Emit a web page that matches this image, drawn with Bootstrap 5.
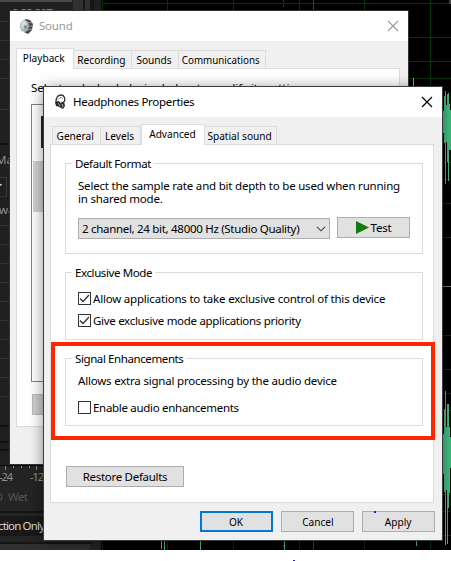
<!DOCTYPE html>
<html lang="en">
<head>
<meta charset="utf-8">
<meta name="viewport" content="width=device-width, initial-scale=1">
<title>Headphones Properties</title>
<link href="https://cdn.jsdelivr.net/npm/bootstrap@5.3.0/dist/css/bootstrap.min.css" rel="stylesheet">
<style>
body{width:451px;height:561px;background:#fff;font-family:"Noto Sans","Open Sans",sans-serif;font-size:11.5px;line-height:17px;color:#000;letter-spacing:-.2px}
.desk{width:451px;height:561px}
.backdrop{left:0;top:0}
.win{background:#f0f0f0;width:398px;height:453px}
.win-sound{left:10px;top:11px;box-shadow:0 0 0 1px #333}
.win-props{left:44px;top:87px;box-shadow:0 0 0 1px #3c3c3c,0 2px 14px rgba(0,0,0,.5)}
.title{height:30px;background:#fff;padding:0 9px 0 10px}
.title .caption{line-height:16px;padding-left:3px;margin-left:3px}
.inactive{color:#999}
.tabs{padding-left:8px;height:27px}
.tab-x{height:18px;border:1px solid #dcdcdc;border-bottom:0;border-left-width:0;white-space:nowrap;line-height:17px;letter-spacing:0;background:#f0f0f0;display:flex;justify-content:center}
.tab-x.first{border-left-width:1px}
.tab-x.on{height:21px;background:#fff;border-left-width:1px;margin-bottom:-1px;z-index:1}
.narrow{display:inline-block;transform:scaleX(.88);letter-spacing:0}
.tab-x .narrow{margin-left:-2px}
.narrower{transform:scaleX(.85)}
.pane{margin:0 8px 0 6px;background:#fff;border:1px solid #dcdcdc;height:359px}
.grp{border:1px solid #dcdcdc;width:358px;margin-left:14px;padding:0 0 0 12px;white-space:nowrap}
.grp legend{float:none;width:auto;margin:0 0 0 -6px;padding:0 3px;font-size:11.5px;line-height:19px;letter-spacing:-.4px}
.tight{letter-spacing:-.3px}
.b{background:#e1e1e1;border:1px solid #adadad;border-radius:0;height:21px;width:73px;padding:0;font-size:11.5px;line-height:19px;color:#000;white-space:nowrap;letter-spacing:-.2px}
.b.ok{border:2px solid #0078d7;line-height:17px}
.b.restore{width:118px;margin:40px 0 0 15px;letter-spacing:-.3px}
.b.faded{margin:12px 0 0 15px;background:#ccc;border-color:#bbb}
.pick{width:252px;height:21px;border:1px solid #adadad;background:#e1e1e1;padding:0 3px;margin-top:1px}
.hint{line-height:13px;padding-top:6px}
.box{width:13px;height:13px;border:1px solid #333;background:#fff;margin-top:4px}
.chk{height:22px;gap:2px}
.chk .lbl{padding-top:2px}
.frame-red{left:51px;top:342px;width:384px;height:98px;border:4px solid #ff2600}
.intro{margin-left:-2px;padding-top:2px;letter-spacing:-.05px}
.list-frame{width:300px;height:278px;margin:8px 0 0 14px;border:1px solid #7d8089}
.margin-strip{left:0;top:550px;width:451px;height:11px;background:#fff}
.dot{width:2px;height:2px;background:#2020e0}
.dot-a{left:374px;top:511px}
.dot-b{left:293px;top:560px}
</style>
</head>
<body>
<div class="desk position-relative overflow-hidden">
<svg class="backdrop position-absolute" width="451" height="561" shape-rendering="crispEdges" font-family="Noto Sans, sans-serif" font-size="11.500" letter-spacing="0">
<rect width="451" height="550"/>
<rect width="101" height="550" fill="#202020"/>
<rect width="72" height="2" fill="#4a4a4a"/><rect x="73" width="21" height="11" fill="#303030"/><rect x="83" width="2" height="11" fill="#161616"/><rect x="90" width="4" height="11" fill="#161616"/>
<path d="M0 21.5H10M0 40.5H10M0 59.5H10M0 78.5H10M0 109.5H10M0 225.5H10M0 244.5H10M0 263.5H10M0 282.5H10M0 301.5H10M0 320.5H10M0 339.5H10M0 358.5H10M0 377.5H10M0 396.5H10" stroke="#343434"/>
<path d="M0 144H10M0 425.500H10M0 441.500H10M0 449.500H10" stroke="#101010" stroke-width="2"/>
<text x="12" y="18" font-size="12" textLength="41" fill="#8a8a8a">0:22.297</text>
<g fill="#929292"><text x="-4" y="164" textLength="22">Mar</text><text x="-1" y="214">wa</text></g>
<path d="M-1 177.5H6.500V196.500H-1" fill="none" stroke="#383838"/><path d="M-2 184H2L0 187Z" fill="#bbb"/>
<rect y="465" width="101" height="85" fill="#242424"/>
<path d="M0 465.500H44" stroke="#090909"/><path d="M5.500 466V470M36.500 466V470M13.500 466V468M21.500 466V468M29.500 466V468" stroke="#8a8a8a"/>
<g fill="#929292" font-size="11"><text x="-1" y="481" textLength="14">-24</text><text x="30" y="481" textLength="14">-12</text></g>
<text x="8" y="501" fill="#555" textLength="20">Wet</text><circle cx="-2" cy="497" r="4" fill="none" stroke="#555" shape-rendering="auto"/>
<path d="M0 511.500H44M0 542.500H92" stroke="#151515" stroke-width="2"/><rect y="516" width="44" height="20" fill="#191919"/><text x="-2" y="530" fill="#d6d6d6" textLength="47">ction Only</text>
<rect y="544" width="90" height="6" fill="#303030"/>
<path d="M102.500 0V550M167.500 0V550M233.500 0V550M299.500 0V550M364.500 0V550M430.500 0V550M102 3.500H451M408 37.500H451M408 61.500H451M408 78.500H451M442 162.500H451M442 179.500H451M442 203.500H451M442 237.500H451M442 335.500H451M442 369.500H451M442 393.500H451M442 410.500H451M442 452.500H451M442 468.500H451M442 494.500H451M442 511.500H451M442 535.500H451" stroke="#073407"/>
<path d="M283.500 0V11M283.500 545V547" stroke="#d00000" stroke-dasharray="2 3"/><path d="M313.500 0V11M313.500 540V550" stroke="#d00000"/>
<path d="M413.500 78V90" stroke="#40c98a"/><path d="M442 286.500H451" stroke="#777"/>
<path d="M442 101H443V111H444V96H445V91H446V105H447V94H448V93H449V104H450V110H451V150H449V181H448V162H447V142H446V184H445V143H444V133H443V153H442Z" fill="#40c083"/>
<path d="M445 391H446V421H445ZM447 404H448V421H447Z" fill="#40c083"/>
<path d="M442 421H443V434H444V409H445V401H446V427H447V404H449V427H450V437H451V468H450V493H449V508H448V544H447V490H446V545H445V492H444V474H443V500H442Z" fill="#40c083"/>
<path d="M161.500 540V549M164.500 540V550M200.500 540V550M284.500 540V550M416.500 540V546" stroke="#40c083"/>
<rect x="449" width="2" height="4" fill="#444"/>
</svg>

<section class="win win-sound position-absolute overflow-hidden">
  <div class="title d-flex align-items-center">
    <svg width="13" height="15" viewBox="0 0 13 15"><path d="M5 0L10 1L13 5L12 11L8 15L4 13Z" fill="#444"/><path d="M8 3L12 4M9 7H13M8 11L12 10" stroke="#999"/><ellipse cx="4.500" cy="7" rx="4.500" ry="6" fill="#a9b4b9"/><ellipse cx="4" cy="6" rx="2.800" ry="4" fill="#d5dee2"/><circle cx="5.500" cy="8" r="2" fill="#84939a"/></svg>
    <span class="caption inactive text-nowrap">Sound</span>
    <svg class="ms-auto" width="12" height="12"><path d="M1 1L11 11M11 1L1 11" stroke="#999" stroke-width="1.100"/></svg>
  </div>
  <div class="tabs d-flex align-items-end ps-1 ms-0">
    <div class="tab-x on position-relative" style="width:58px;margin-left:2px"><span class="narrow">Playback</span></div>
    <div class="tab-x" style="width:58px"><span class="narrow">Recording</span></div>
    <div class="tab-x" style="width:47px"><span class="narrow">Sounds</span></div>
    <div class="tab-x" style="width:87px"><span class="narrow narrower">Communications</span></div>
  </div>
  <div class="pane pt-2">
    <div class="intro text-nowrap ps-3">Select a playback device below to modify its settings:</div>
    <div class="list-frame">
      <svg width="14" height="107" class="d-block"><rect x="9" y="11" width="5" height="32" fill="#222"/><rect x="1" y="56" width="13" height="51" fill="#d0d0d0"/></svg>
    </div>
    <div class="b faded"></div>
  </div>
</section>

<section class="win win-props position-absolute">
  <div class="title d-flex align-items-center">
    <svg width="13" height="16" viewBox="0 0 13 16"><path d="M2 8C2 3 4 1 7 1C10 1 11.500 4 10.500 8" fill="none" stroke="#333" stroke-width="1.300"/><path d="M3.500 6L7 3L9 5" fill="none" stroke="#999"/><path d="M1 8L5 7L7 10L6 13L2 12Z" fill="#222"/><path d="M6 9L10 7L11 12L9 15L5 13Z" fill="#333"/><path d="M4 9L6 12M8 10L9 13" stroke="#aaa"/></svg>
    <span class="caption tight text-nowrap">Headphones Properties</span>
    <svg class="ms-auto" width="12" height="12"><path d="M1 1L11 11M11 1L1 11" stroke="#000" stroke-width="1.150"/></svg>
  </div>
  <div class="tabs d-flex align-items-end">
    <div class="tab-x first" style="width:49px"><span class="narrow">General</span></div>
    <div class="tab-x" style="width:40px"><span class="narrow">Levels</span></div>
    <div class="tab-x on position-relative" style="width:64px"><span class="narrow">Advanced</span></div>
    <div class="tab-x" style="width:72px"><span class="narrow">Spatial sound</span></div>
  </div>
  <div class="pane" style="padding-top:9px">
    <fieldset class="grp" style="height:100px">
      <legend>Default Format</legend>
      <div class="hint">Select the sample rate and bit depth to be used when running<br>in shared mode.</div>
      <div class="d-flex" style="margin-top:12px;gap:7px">
        <div class="pick d-flex align-items-center justify-content-between"><span class="tight">2 channel, 24 bit, 48000 Hz (Studio Quality)</span><svg width="10" height="6"><path d="M1 .8L5 4.800L9 .8" fill="none" stroke="#444" stroke-width="1.100"/></svg></div>
        <button class="b d-flex align-items-center justify-content-center"><svg width="13" height="13" style="margin-right:2px"><path d="M0 0L13 6.500L0 13Z" fill="#107c10"/></svg>Test</button>
      </div>
    </fieldset>
    <fieldset class="grp" style="height:77px;margin-top:9px">
      <legend>Exclusive Mode</legend>
      <div class="chk d-flex align-items-start" style="margin-top:6px"><span class="box d-flex"><svg width="11" height="11"><path d="M1 5.500L4 8.500L10 2" fill="none" stroke="#333" stroke-width="1.300"/></svg></span><span class="lbl">Allow applications to take exclusive control of this device</span></div>
      <div class="chk d-flex align-items-start"><span class="box d-flex"><svg width="11" height="11"><path d="M1 5.500L4 8.500L10 2" fill="none" stroke="#333" stroke-width="1.300"/></svg></span><span class="lbl tight">Give exclusive mode applications priority</span></div>
    </fieldset>
    <fieldset class="grp" style="height:77px;margin-top:9px">
      <legend>Signal Enhancements</legend>
      <div style="margin-top:4px">Allows extra signal processing by the audio device</div>
      <div class="chk d-flex align-items-start" style="margin-top:8px"><span class="box"></span><span class="lbl tight">Enable audio enhancements</span></div>
    </fieldset>
    <button class="b restore d-block">Restore Defaults</button>
  </div>
  <div class="d-flex" style="gap:8px;margin:8px 0 0 156px">
    <button class="b ok"><span class="narrow">OK</span></button><button class="b"><span class="narrow">Cancel</span></button><button class="b"><span class="narrow">Apply</span></button>
  </div>
</section>
<div class="frame-red position-absolute"></div>
<div class="margin-strip position-absolute"></div>
<div class="dot dot-a position-absolute"></div>
<div class="dot dot-b position-absolute"></div>
</div>
<script src="https://cdn.jsdelivr.net/npm/bootstrap@5.3.0/dist/js/bootstrap.bundle.min.js"></script>
</body>
</html>
